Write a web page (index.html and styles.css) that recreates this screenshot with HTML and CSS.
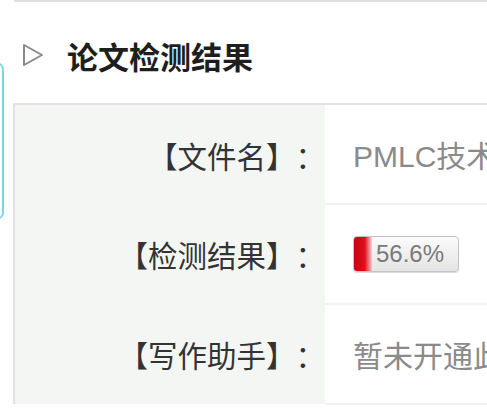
FILE: index.html
```html
<!DOCTYPE html>
<html lang="zh-CN">
<head>
    <meta charset="UTF-8">
    <meta name="viewport" content="width=device-width, initial-scale=1.0">
    <title>论文检测结果</title>
    <link rel="stylesheet" href="styles.css">
</head>
<body>
    <div class="page">
        <div class="prev-line"></div>

        <!-- floating side widget, only its right edge is visible -->
        <div class="side-box"></div>

        <div class="section-title">
            <svg class="arrow" width="24" height="24" viewBox="0 0 24 24">
                <path d="M3 2 L21 12 L3 22 Z" fill="none" stroke="#8a8a8a" stroke-width="2" stroke-linejoin="round"/>
            </svg>
            <h2>论文检测结果</h2>
        </div>

        <table class="result">
            <tr>
                <th>【文件名】：</th>
                <td><span class="value">PMLC技术在现代企业管理中的应用研究.docx</span></td>
            </tr>
            <tr>
                <th>【检测结果】：</th>
                <td>
                    <div class="meter">
                        <div class="meter-fill" style="width: 17%"></div>
                        <span class="meter-text">56.6%</span>
                    </div>
                </td>
            </tr>
            <tr>
                <th>【写作助手】：</th>
                <td><span class="value">暂未开通此服务</span></td>
            </tr>
        </table>
    </div>
</body>
</html>
```

FILE: styles.css
```css
body {
    margin: 0;
    background: #fff;
    font-family: "Liberation Sans", "Noto Sans CJK SC", sans-serif;
    color: #333;
    text-spacing-trim: space-all;
}
.page {
    position: relative;
    width: 487px;
    height: 414px;
    overflow: hidden;
}
.prev-line {
    margin-left: 14px;
    height: 2px;
    background: #e0e0e0;
}
.side-box {
    position: absolute;
    left: -30px;
    top: 63px;
    width: 30px;
    height: 152px;
    border: 2px solid #7fd6e2;
    border-radius: 6px;
}
.section-title {
    display: flex;
    align-items: center;
    height: 101px;
    padding-left: 21px;
    padding-top: 5px;
    box-sizing: border-box;
}
.arrow {
    display: block;
}
.section-title h2 {
    margin: 0 0 0 22px;
    font-size: 31px;
    font-weight: bold;
    color: #1e1e1e;
}
.result {
    margin-left: 13px;
    border-collapse: collapse;
    border-top: 2px solid #e2e2e2;
    border-left: 2px solid #e2e2e2;
    table-layout: fixed;
    width: 600px;
}
.result th {
    width: 310px;
    height: 98px;
    padding: 0;
    background: #f4f6f4;
    text-align: right;
    font-size: 29.5px;
    font-weight: normal;
    color: #333;
    white-space: nowrap;
}
.result td {
    height: 98px;
    padding: 0 0 0 28px;
    border-bottom: 2px solid #f2f2f2;
    white-space: nowrap;
    overflow: hidden;
}
.value {
    font-size: 30px;
    color: #8a8a8a;
}
.meter {
    position: relative;
    width: 104px;
    height: 34px;
    border: 1px solid #c4c4c4;
    border-radius: 4px;
    background: linear-gradient(#fbfbfb, #e4e4e4);
    box-shadow: 0 1px 1px rgba(0, 0, 0, 0.15);
    overflow: hidden;
    display: flex;
    align-items: center;
}
.meter-fill {
    position: absolute;
    left: 0;
    top: 0;
    bottom: 0;
    background: linear-gradient(to right, #c80010 0%, #e0101c 60%, rgba(230, 30, 40, 0.15) 100%);
}
.meter-text {
    position: relative;
    margin-left: 22px;
    font-size: 24px;
    color: #7a7a7a;
}
```
